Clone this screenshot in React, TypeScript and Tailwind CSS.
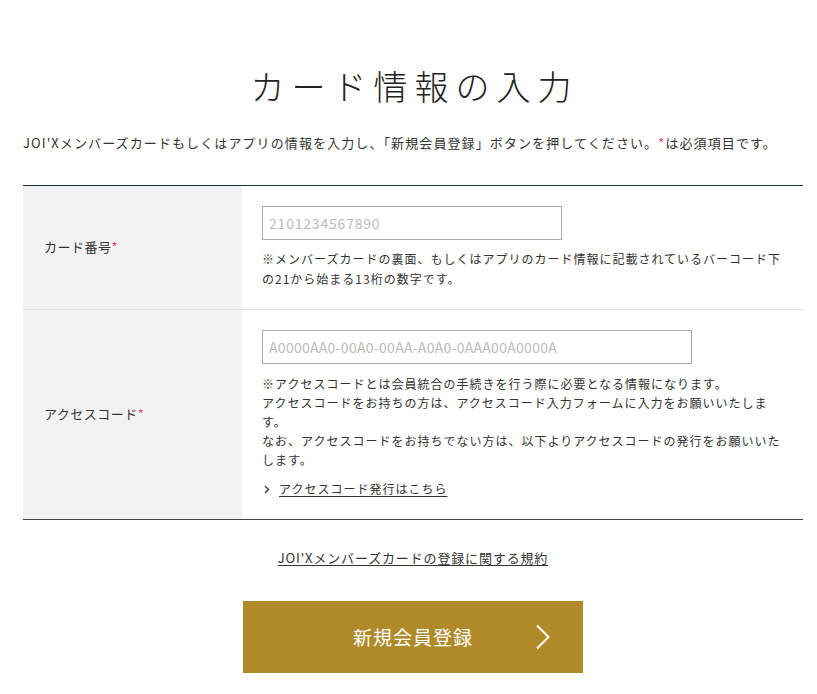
import React from "react";

const font = { fontFamily: '"Noto Sans CJK JP", "Noto Sans", sans-serif' };

function Req() {
  return <span className="text-[#e4477f]">*</span>;
}

function Row({
  label,
  children,
  last,
}: {
  label: React.ReactNode;
  children: React.ReactNode;
  last?: boolean;
}) {
  return (
    <div className={`flex ${last ? "" : "border-b border-[#e2e2e2]"}`}>
      <div className="w-[219px] shrink-0 bg-[#f2f2f2] flex items-center pl-[21px] pb-[2px] text-[13px] tracking-[0.5px] text-[#333]">
        {label}
      </div>
      <div className="flex-1 pl-5 pr-[15px] py-5">{children}</div>
    </div>
  );
}

export default function App() {
  return (
    <div className="min-h-screen bg-white text-[#333]" style={font}>
      <div className="ml-[23px] w-[780px] pt-[61px]">
        <h1 className="text-center text-[34px] leading-[50px] font-light tracking-[7px] pl-[3px] text-[#222]">
          カード情報の入力
        </h1>
        <p className="mt-[22px] text-[13px] leading-5 tracking-[1.1px] whitespace-nowrap">
          JOI'Xメンバーズカードもしくはアプリの情報を入力し、「新規会員登録」ボタンを押してください。
          <Req />
          は必須項目です。
        </p>

        <div className="mt-8 border-t border-[#1f2a44] border-b border-b-[#444]">
          <Row
            label={
              <span>
                カード番号
                <Req />
              </span>
            }
          >
            <input
              type="text"
              placeholder="2101234567890"
              className="block w-[300px] h-[34px] border border-[#aaa] px-[6px] text-[14px] tracking-[0.8px] placeholder:text-[#bbb] outline-none"
            />
            <p className="mt-[9px] text-[12px] leading-5 tracking-[1px]">
              ※メンバーズカードの裏面、もしくはアプリのカード情報に記載されているバーコード下の21から始まる13桁の数字です。
            </p>
          </Row>
          <Row
            last
            label={
              <span>
                アクセスコード
                <Req />
              </span>
            }
          >
            <input
              type="text"
              placeholder="A0000AA0-00A0-00AA-A0A0-0AAA00A0000A"
              className="block w-[430px] h-[34px] border border-[#aaa] px-[6px] text-[14px] tracking-[0.3px] placeholder:text-[#bbb] outline-none"
            />
            <div className="mt-[10px] text-[12px] leading-[19px] tracking-[1px]">
              <p>※アクセスコードとは会員統合の手続きを行う際に必要となる情報になります。</p>
              <p>アクセスコードをお持ちの方は、アクセスコード入力フォームに入力をお願いいたします。</p>
              <p>なお、アクセスコードをお持ちでない方は、以下よりアクセスコードの発行をお願いいたします。</p>
            </div>
            <a href="#" className="mt-[10px] flex items-center text-[12px] leading-5 tracking-[1px]">
              <svg width="6" height="9" viewBox="0 0 6 9" className="ml-[2px] mr-[9px]">
                <path d="M1 1l3.5 3.5L1 8" fill="none" stroke="#333" strokeWidth="1.3" />
              </svg>
              <span className="underline underline-offset-2">アクセスコード発行はこちら</span>
            </a>
          </Row>
        </div>

        <div className="mt-7 text-center text-[13px] leading-5">
          <a href="#" className="tracking-[0.85px] underline underline-offset-2">
            JOI'Xメンバーズカードの登録に関する規約
          </a>
        </div>

        <div className="mt-[33px] flex justify-center">
          <button className="relative w-[340px] h-[72px] bg-[#b08a28] text-white text-[19px] tracking-[1px] flex items-center justify-center">
            新規会員登録
            <svg
              width="16"
              height="26"
              viewBox="0 0 16 26"
              className="absolute right-[32px] top-1/2 -translate-y-1/2"
            >
              <path d="M2 1.5l11.5 11.5L2 24.5" fill="none" stroke="#fff" strokeWidth="2" />
            </svg>
          </button>
        </div>
      </div>
    </div>
  );
}
